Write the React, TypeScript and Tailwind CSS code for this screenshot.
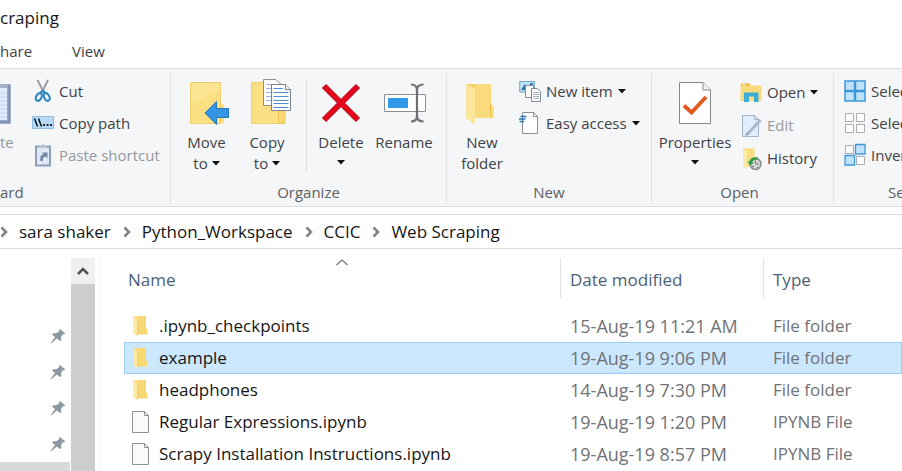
import type { ReactNode } from "react";

function Caret() {
  return (
    <svg width="8" height="5" viewBox="0 0 8 5" className="shrink-0" aria-hidden="true">
      <path d="M0 0H8L4 4.5Z" fill="#111" />
    </svg>
  );
}

/* ---------- large ribbon icons ---------- */

function ClipboardIcon() {
  return (
    <svg width="11" height="44" viewBox="0 0 11 44" aria-hidden="true">
      <path d="M-4 5H9V41H-4Z" fill="#dfebfb" stroke="#8494b4" strokeWidth="3.5" />
      <path d="M0 12H7M0 16H7M0 20H7M0 24H7M0 28H7M0 32H7M0 36H7" stroke="#bdd0ee" />
      <path d="M0 4H8L7 7H0Z" fill="#a6b1c7" />
    </svg>
  );
}

function MoveIcon() {
  return (
    <svg width="40" height="44" viewBox="0 0 40 44" className="ml-1" aria-hidden="true">
      <path d="M1.5 1.5H31.5V23H35V42.500H1.500Z" fill="#fbdf83" />
      <path d="M2 2H31V8L2 24Z" fill="#fde699" opacity=".7" />
      <path d="M1.500 42.500V1.500H31.500V42.500Z" fill="none" stroke="#efce6c" />
      <path d="M16 32L27.500 20.500V27.500H39.500V36.500H27.500V43.500Z" fill="#3595e4" stroke="#2477bd" />
    </svg>
  );
}

function CopyIcon() {
  return (
    <svg width="42" height="48" viewBox="0 0 42 48" className="-mt-1 ml-2" aria-hidden="true">
      <path d="M1.5 5.500H30V46.500H1.500Z" fill="#fbdf83" stroke="#efce6c" />
      <path d="M28.500 30H35V46.500H28.500Z" fill="#f8d874" stroke="#e8c35d" />
      <path d="M13.500 2.500H26L32.500 9V28.500H13.500Z" fill="#fff" stroke="#8e9298" />
      <path d="M16 7.500H25M16 11.500H21M16 15.500H21M16 19.500H21M16 23.500H21" stroke="#9ab0e4" />
      <path d="M21.500 7.500H35.500L40.500 12.500V33.500H21.500Z" fill="#fff" stroke="#7f858c" />
      <path d="M35.500 7.500V12.500H40.500" fill="#eef0f2" stroke="#7f858c" />
      <path d="M23.500 11.500H33M23.500 15.500H38.500M23.500 19.500H38.500M23.500 23.500H38.500M23.500 26.500H38.500M23.500 30.500H38.500" stroke="#4f8fd6" />
    </svg>
  );
}

function DeleteIcon() {
  return (
    <svg width="40" height="44" viewBox="0 0 40 44" aria-hidden="true">
      <path d="M3 5L37 39M37 5L3 39" stroke="#a80f1b" strokeWidth="6" />
      <path d="M3.500 5.500L36.500 38.500M36.500 5.500L3.500 38.500" stroke="#e3081b" strokeWidth="4.600" />
    </svg>
  );
}

function RenameIcon() {
  return (
    <svg width="44" height="44" viewBox="0 0 44 44" className="ml-0.5" aria-hidden="true">
      <path d="M1.500 13.500H42.500V30.500H1.500Z" fill="#fff" stroke="#8b8e92" />
      <path d="M5 17H25V27H5Z" fill="#3298e8" />
      <path d="M28 3.500C32 3.500 34 5.500 34 9V35C34 38.500 32 40.500 28 40.500M40.500 3.500C36 3.500 34 5.500 34 9M34 35C34 38.500 36 40.500 40.500 40.500" fill="none" stroke="#6d7074" strokeWidth="2.200" />
    </svg>
  );
}

function NewFolderIcon() {
  return (
    <svg width="30" height="44" viewBox="0 0 30 44" className="-ml-1" aria-hidden="true">
      <path d="M1 3H26V23L28.500 26V37H9V43L1 36Z" fill="#f5cf62" />
      <path d="M10 3H26V23L28.500 26V37H10Z" fill="#fadb7c" />
      <path d="M1 3L10 7V42.500L1 37Z" fill="#fde79c" />
      <path d="M25.500 23V36.500" stroke="#e8bf55" />
    </svg>
  );
}

function PropertiesIcon() {
  return (
    <svg width="34" height="44" viewBox="0 0 34 44" aria-hidden="true">
      <path d="M1.500 1.500H25L32.500 9V42.500H1.500Z" fill="#fff" stroke="#85888c" />
      <path d="M25 1.500V9H32.500" fill="#f0f1f3" stroke="#85888c" />
      <path d="M6 24.500L13.500 31.500L28 16" fill="none" stroke="#e2591f" strokeWidth="3.800" />
    </svg>
  );
}

/* ---------- small ribbon icons, each in a 22px box ---------- */

function Small({ children }: { children: ReactNode }) {
  return (
    <svg width="22" height="24" viewBox="0 0 22 24" className="shrink-0" aria-hidden="true">
      {children}
    </svg>
  );
}

function CutIcon() {
  return (
    <Small>
      <path d="M5.500 1L12.500 15M16 1L9 15" stroke="#9c9fa3" strokeWidth="2" />
      <ellipse cx="6.800" cy="18" rx="2.600" ry="4" fill="none" stroke="#2b86c8" strokeWidth="2" transform="rotate(28 6.800 18)" />
      <ellipse cx="14.700" cy="18" rx="2.600" ry="4" fill="none" stroke="#2b86c8" strokeWidth="2" transform="rotate(-28 14.700 18)" />
      <path d="M8 14L10.800 11.500L13.500 14" fill="none" stroke="#2b86c8" strokeWidth="2" />
    </Small>
  );
}

function CopyPathIcon() {
  return (
    <Small>
      <path d="M.5 5.500H21.500V17.500H.5Z" fill="#b6dbf8" stroke="#8dbce0" />
      <path d="M2.500 7.500L5.500 15.500M6.500 7.500L9.500 15.500" stroke="#111" strokeWidth="1.500" />
      <path d="M11 13H13V15H11ZM14.500 13H16.500V15H14.500ZM18 13H20V15H18Z" fill="#223" />
    </Small>
  );
}

function PasteShortcutIcon() {
  return (
    <Small>
      <path d="M4 3.500H18V22.500H4Z" fill="#dfe8f5" stroke="#8f9fba" strokeWidth="2" />
      <path d="M7 5V2.500H9.500L11 .5L12.500 2.500H15V5Z" fill="#b7c0cd" />
      <path d="M8.500 18C7.500 14 9 11.500 11.500 11.300L10 9.500H15.500V15.500L13.700 13.500C11.500 14 10.500 15.500 11 18Z" fill="#7487a8" />
    </Small>
  );
}

function NewItemIcon() {
  return (
    <Small>
      <path d="M.7 2.500H15.500V13H.7Z" fill="#bfe4f8" stroke="#7ba7c4" />
      <path d="M2 11L6 5L9 11Z" fill="#2f6fa8" />
      <path d="M11 4H14V6.500H11Z" fill="#3979ae" />
      <path d="M6.500 6.500H14.500V18.500H6.500Z" fill="#fff" stroke="#888c91" />
      <path d="M12.500 9.500H18.500L21.500 12.500V22.500H12.500Z" fill="#fff" stroke="#84888d" />
      <path d="M14 13.500H20M14 15.500H20M14 17.500H20M14 19.500H20" stroke="#9db4cb" />
    </Small>
  );
}

function EasyAccessIcon() {
  return (
    <Small>
      <path d="M3.500 1.500H14.500L18.500 5.500V22.500H3.500Z" fill="#fff" stroke="#8a8d91" />
      <path d="M14.500 1.500V5.500H18.500" fill="none" stroke="#8a8d91" />
      <path d="M1.500 5.500H7.500M0 8H6.500M.5 10.500H5" stroke="#2676b5" strokeWidth="1.400" />
    </Small>
  );
}

function OpenIcon() {
  return (
    <Small>
      <path d="M.5 2.500H10L11.500 4.500H21.500V20H.5Z" fill="#fadb7b" />
      <path d="M1 2.500H9.500V5H1Z" fill="#eebf4c" />
      <path d="M3 3H5V4.500H3Z" fill="#fff" />
      <path d="M4 11.500H18.500V21H14V15.500H9V21H4Z" fill="#3eaed8" />
    </Small>
  );
}

function EditIcon() {
  return (
    <Small>
      <path d="M2.500 1.500H14.500L18.500 5.500V22.500H2.500Z" fill="#e2edfb" stroke="#a3b3ca" />
      <path d="M14.500 1.500V5.500H18.500" fill="none" stroke="#a3b3ca" />
      <path d="M7 20.500L20.500 6" stroke="#a7b7cd" strokeWidth="3" />
      <path d="M5 22L8.500 20.500L6.500 18.500Z" fill="#8495b0" />
    </Small>
  );
}

function HistoryIcon() {
  return (
    <Small>
      <path d="M3 1.500H14.500V19H7V22L3 19Z" fill="#fbdc7e" />
      <path d="M3 1.500L7 4V22L3 19Z" fill="#fdeaa8" />
      <circle cx="15.500" cy="17" r="5.500" fill="#d5d7d9" stroke="#8b8e91" strokeWidth="1.500" />
      <path d="M15.500 13.500V17H19M12 19.500H14M17 20.500H18" fill="none" stroke="#75787c" />
      <path d="M18 10.500C13 9.500 10 11.500 9.500 14.500L7.500 14.500L10.500 18.500L14 15.500H12C12.500 13.500 14.500 12 18 12.500Z" fill="#2ca043" />
    </Small>
  );
}

function SelectAllIcon() {
  return (
    <Small>
      <path d="M1 2H10.500V11.500H1ZM11.500 2H21V11.500H11.500ZM1 12.500H10.500V22H1ZM11.500 12.500H21V22H11.500Z" fill="#bfe2fb" stroke="#3f97d4" strokeWidth="1.500" />
    </Small>
  );
}

function SelectNoneIcon() {
  return (
    <Small>
      <path d="M1.500 2.500H9.500V10.500H1.500ZM12.500 2.500H20.500V10.500H12.500ZM1.500 13.500H9.500V21.500H1.500ZM12.500 13.500H20.500V21.500H12.500Z" fill="#fdfdfe" stroke="#a9acb0" />
    </Small>
  );
}

function InvertIcon() {
  return (
    <Small>
      <path d="M1.500 2.500H9.500V10.500H1.500ZM12.500 13.500H20.500V21.500H12.500Z" fill="#fdfdfe" stroke="#a9acb0" />
      <path d="M11.500 1.500H21V11H11.500ZM1 12.500H10.500V22H1Z" fill="#bfe2fb" stroke="#3f97d4" strokeWidth="1.300" />
    </Small>
  );
}

/* ---------- file list icons ---------- */

function FolderIcon() {
  return (
    <svg width="18" height="22" viewBox="0 0 18 22" className="shrink-0" aria-hidden="true">
      <path d="M1.500 1H14V13L15.500 14.500V19.500H6V21.500L1.500 18.500Z" fill="#f9d876" />
      <path d="M1.500 1L6 4V21.500L1.500 18.500Z" fill="#fde9a6" />
      <path d="M6 4V19.500" stroke="#edc65f" />
    </svg>
  );
}

function FileIcon() {
  return (
    <svg width="18" height="22" viewBox="0 0 18 22" className="shrink-0" aria-hidden="true">
      <path d="M.5 .5H12.500L16.500 4.500V21.500H.5Z" fill="#fafafb" stroke="#8f9296" />
      <path d="M12.500 .5V4.500H16.500" fill="none" stroke="#8f9296" />
    </svg>
  );
}

function PinIcon() {
  return (
    <svg width="16" height="16" viewBox="0 0 16 16" aria-hidden="true">
      <path d="M9.500 .8L15.500 5.500L13.800 6.300L12.500 6.500L11 9.500L11.500 12L10 13L6.800 10.500L1 15.500L.5 15L5 9L2 6.500L3.500 5.200L6.500 5.200L9.300 3Z" fill="#8c98a3" />
    </svg>
  );
}

/* ---------- ribbon building blocks ---------- */

function Group({ label, className, labelClass = "text-center", children }: { label: string; className: string; labelClass?: string; children: ReactNode }) {
  return (
    <section className={`flex flex-col ${className}`}>
      <div className="flex h-[107px]">{children}</div>
      <div className={`leading-6 text-[#5c5f63] ${labelClass}`}>{label}</div>
    </section>
  );
}

function BigButton({ icon, lines, caret, className }: { icon: ReactNode; lines: string[]; caret?: "inline" | "below"; className: string }) {
  return (
    <button className={`flex shrink-0 flex-col items-center pt-2 ${className}`}>
      <span className="flex h-11 justify-center">{icon}</span>
      <span className="mt-[7px] flex flex-col items-center leading-[21px] whitespace-nowrap">
        {lines.map((line, i) => (
          <span key={line} className="flex items-center gap-1">
            {line}
            {caret === "inline" && i === lines.length - 1 && <Caret />}
          </span>
        ))}
      </span>
      {caret === "below" && (
        <span className="mt-[7px]">
          <Caret />
        </span>
      )}
    </button>
  );
}

function SmallButton({ icon, label, caret, disabled, tall }: { icon: ReactNode; label: string; caret?: boolean; disabled?: boolean; tall?: boolean }) {
  return (
    <button disabled={disabled} className={`flex items-center gap-[5px] whitespace-nowrap disabled:text-[#96999d] ${tall ? "h-[33px]" : "h-8"}`}>
      {icon}
      {label}
      {caret && <Caret />}
    </button>
  );
}

const crumbs = ["sara shaker", "Python_Workspace", "CCIC", "Web Scraping"];

const files = [
  { name: ".ipynb_checkpoints", date: "15-Aug-19 11:21 AM", type: "File folder" },
  { name: "example", date: "19-Aug-19 9:06 PM", type: "File folder", selected: true },
  { name: "headphones", date: "14-Aug-19 7:30 PM", type: "File folder" },
  { name: "Regular Expressions.ipynb", date: "19-Aug-19 1:20 PM", type: "IPYNB File" },
  { name: "Scrapy Installation Instructions.ipynb", date: "19-Aug-19 8:57 PM", type: "IPYNB File" },
];

export default function App() {
  return (
    <div className="flex min-h-screen flex-col overflow-hidden bg-white font-['Open_Sans','Noto_Sans',sans-serif] text-[15px] text-[#3f4246]">
      <header className="h-9 text-[17px] leading-9 text-[#161616]">craping</header>
      <nav className="flex h-8 items-center gap-10 pb-0.5">
        <button>hare</button>
        <button>View</button>
      </nav>

      <div className="flex overflow-hidden border-y border-[#d9dbdd] bg-[#f4f6f8] pt-1 pb-0.5">
        <Group label="ard" className="w-[171px] shrink-0 border-r border-[#dfe1e4]" labelClass="text-left">
          <button disabled className="flex w-8 flex-col items-start pt-2 text-[#96999d]">
            <ClipboardIcon />
            <span className="mt-[7px] leading-[21px]">te</span>
          </button>
          <div className="pt-0.5">
            <SmallButton icon={<CutIcon />} label="Cut" />
            <SmallButton icon={<CopyPathIcon />} label="Copy path" />
            <SmallButton icon={<PasteShortcutIcon />} label="Paste shortcut" disabled />
          </div>
        </Group>

        <Group label="Organize" className="w-[276px] shrink-0 border-r border-[#dfe1e4]">
          <BigButton icon={<MoveIcon />} lines={["Move", "to"]} caret="inline" className="ml-[5px] w-[61px]" />
          <BigButton icon={<CopyIcon />} lines={["Copy", "to"]} caret="inline" className="w-[60px]" />
          <div className="mt-1.5 mr-1 mb-2 ml-[9px] w-px bg-[#dadcdf]" />
          <BigButton icon={<DeleteIcon />} lines={["Delete"]} caret="below" className="w-[60px]" />
          <BigButton icon={<RenameIcon />} lines={["Rename"]} className="w-[66px]" />
        </Group>

        <Group label="New" className="w-[205px] shrink-0 border-r border-[#dfe1e4]">
          <BigButton icon={<NewFolderIcon />} lines={["New", "folder"]} className="ml-0.5 w-[66px]" />
          <div className="pt-0.5 pl-1">
            <SmallButton icon={<NewItemIcon />} label="New item" caret />
            <SmallButton icon={<EasyAccessIcon />} label="Easy access" caret />
          </div>
        </Group>

        <Group label="Open" className="w-[182px] shrink-0 border-r border-[#dfe1e4] pr-1.5">
          <BigButton icon={<PropertiesIcon />} lines={["Properties"]} caret="below" className="ml-1 w-[78px]" />
          <div className="pt-[3px] pl-1.5">
            <SmallButton icon={<OpenIcon />} label="Open" caret tall />
            <SmallButton icon={<EditIcon />} label="Edit" disabled tall />
            <SmallButton icon={<HistoryIcon />} label="History" tall />
          </div>
        </Group>

        <Group label="Se" className="flex-1 pl-2.5" labelClass="pl-11">
          <div className="pt-0.5">
            <SmallButton icon={<SelectAllIcon />} label="Selec" />
            <SmallButton icon={<SelectNoneIcon />} label="Selec" />
            <SmallButton icon={<InvertIcon />} label="Inver" />
          </div>
        </Group>
      </div>

      <nav className="mt-[7px] flex h-[35px] items-center border-y border-[#d9dbdd] text-[17px] text-[#161616]">
        {crumbs.map((crumb) => (
          <span key={crumb} className="flex items-center">
            <svg width="8" height="12" viewBox="0 0 8 12" className="mr-[11px]" aria-hidden="true">
              <path d="M1.500 1.500L6 6L1.500 10.500" fill="none" stroke="#7f8285" strokeWidth="2.500" />
            </svg>
            <a href="#" className="mr-3 whitespace-nowrap">{crumb}</a>
          </span>
        ))}
      </nav>

      <div className="flex flex-1">
        <aside className="flex w-[70px] shrink-0 flex-col pt-[69px]">
          {[0, 1, 2, 3].map((n) => (
            <div key={n} className="flex h-9 items-center justify-end pr-1">
              <PinIcon />
            </div>
          ))}
          <div className="flex-1 bg-[#d9d9d9]" />
        </aside>
        <div className="mt-[9px] ml-px flex w-6 shrink-0 flex-col bg-[#cdcdcd]">
          <button aria-label="Scroll up" className="flex h-[26px] items-center justify-center bg-[#f0f0f0]">
            <svg width="14" height="10" viewBox="0 0 14 10" aria-hidden="true">
              <path d="M2 8L7 3L12 8" fill="none" stroke="#555" strokeWidth="2.500" />
            </svg>
          </button>
        </div>
        <main className="mt-[9px] ml-1 flex-1 overflow-hidden border-l border-[#f0f0f0] pl-6">
          <table className="w-full table-fixed border-collapse text-left text-[17px]">
            <colgroup>
              <col className="w-[436px]" />
              <col className="w-[203px]" />
              <col />
            </colgroup>
            <thead>
              <tr className="h-[52px] align-top text-[#4c607a]">
                <th className="relative p-0 font-normal">
                  <svg width="12" height="7" viewBox="0 0 12 7" className="absolute top-px left-1/2 -translate-x-1/2" aria-hidden="true">
                    <path d="M.5 6L6 1L11.500 6" fill="none" stroke="#6f7377" strokeWidth="1.200" />
                  </svg>
                  <div className="h-10 pl-1 leading-[44px]">Name</div>
                </th>
                <th className="p-0 font-normal">
                  <div className="h-10 border-l border-[#e2e4e6] pl-[9px] leading-[44px]">Date modified</div>
                </th>
                <th className="p-0 font-normal">
                  <div className="h-10 border-l border-[#e2e4e6] pl-[9px] leading-[44px]">Type</div>
                </th>
              </tr>
            </thead>
            <tbody>
              {files.map((file) => (
                <tr key={file.name} className={`h-8 ${file.selected ? "bg-[#cce8ff] outline -outline-offset-1 outline-[#99cdf3]" : ""}`}>
                  <td className="p-0">
                    <div className="flex items-center gap-[9px] pl-2 leading-8 whitespace-nowrap text-[#161616]">
                      {file.type === "File folder" ? <FolderIcon /> : <FileIcon />}
                      {file.name}
                    </div>
                  </td>
                  <td className="p-0 pl-2.5 text-[18px] leading-8 whitespace-nowrap text-[#707377]">{file.date}</td>
                  <td className="p-0 pl-2.5 leading-8 whitespace-nowrap text-[#707377]">{file.type}</td>
                </tr>
              ))}
            </tbody>
          </table>
        </main>
      </div>
    </div>
  );
}
